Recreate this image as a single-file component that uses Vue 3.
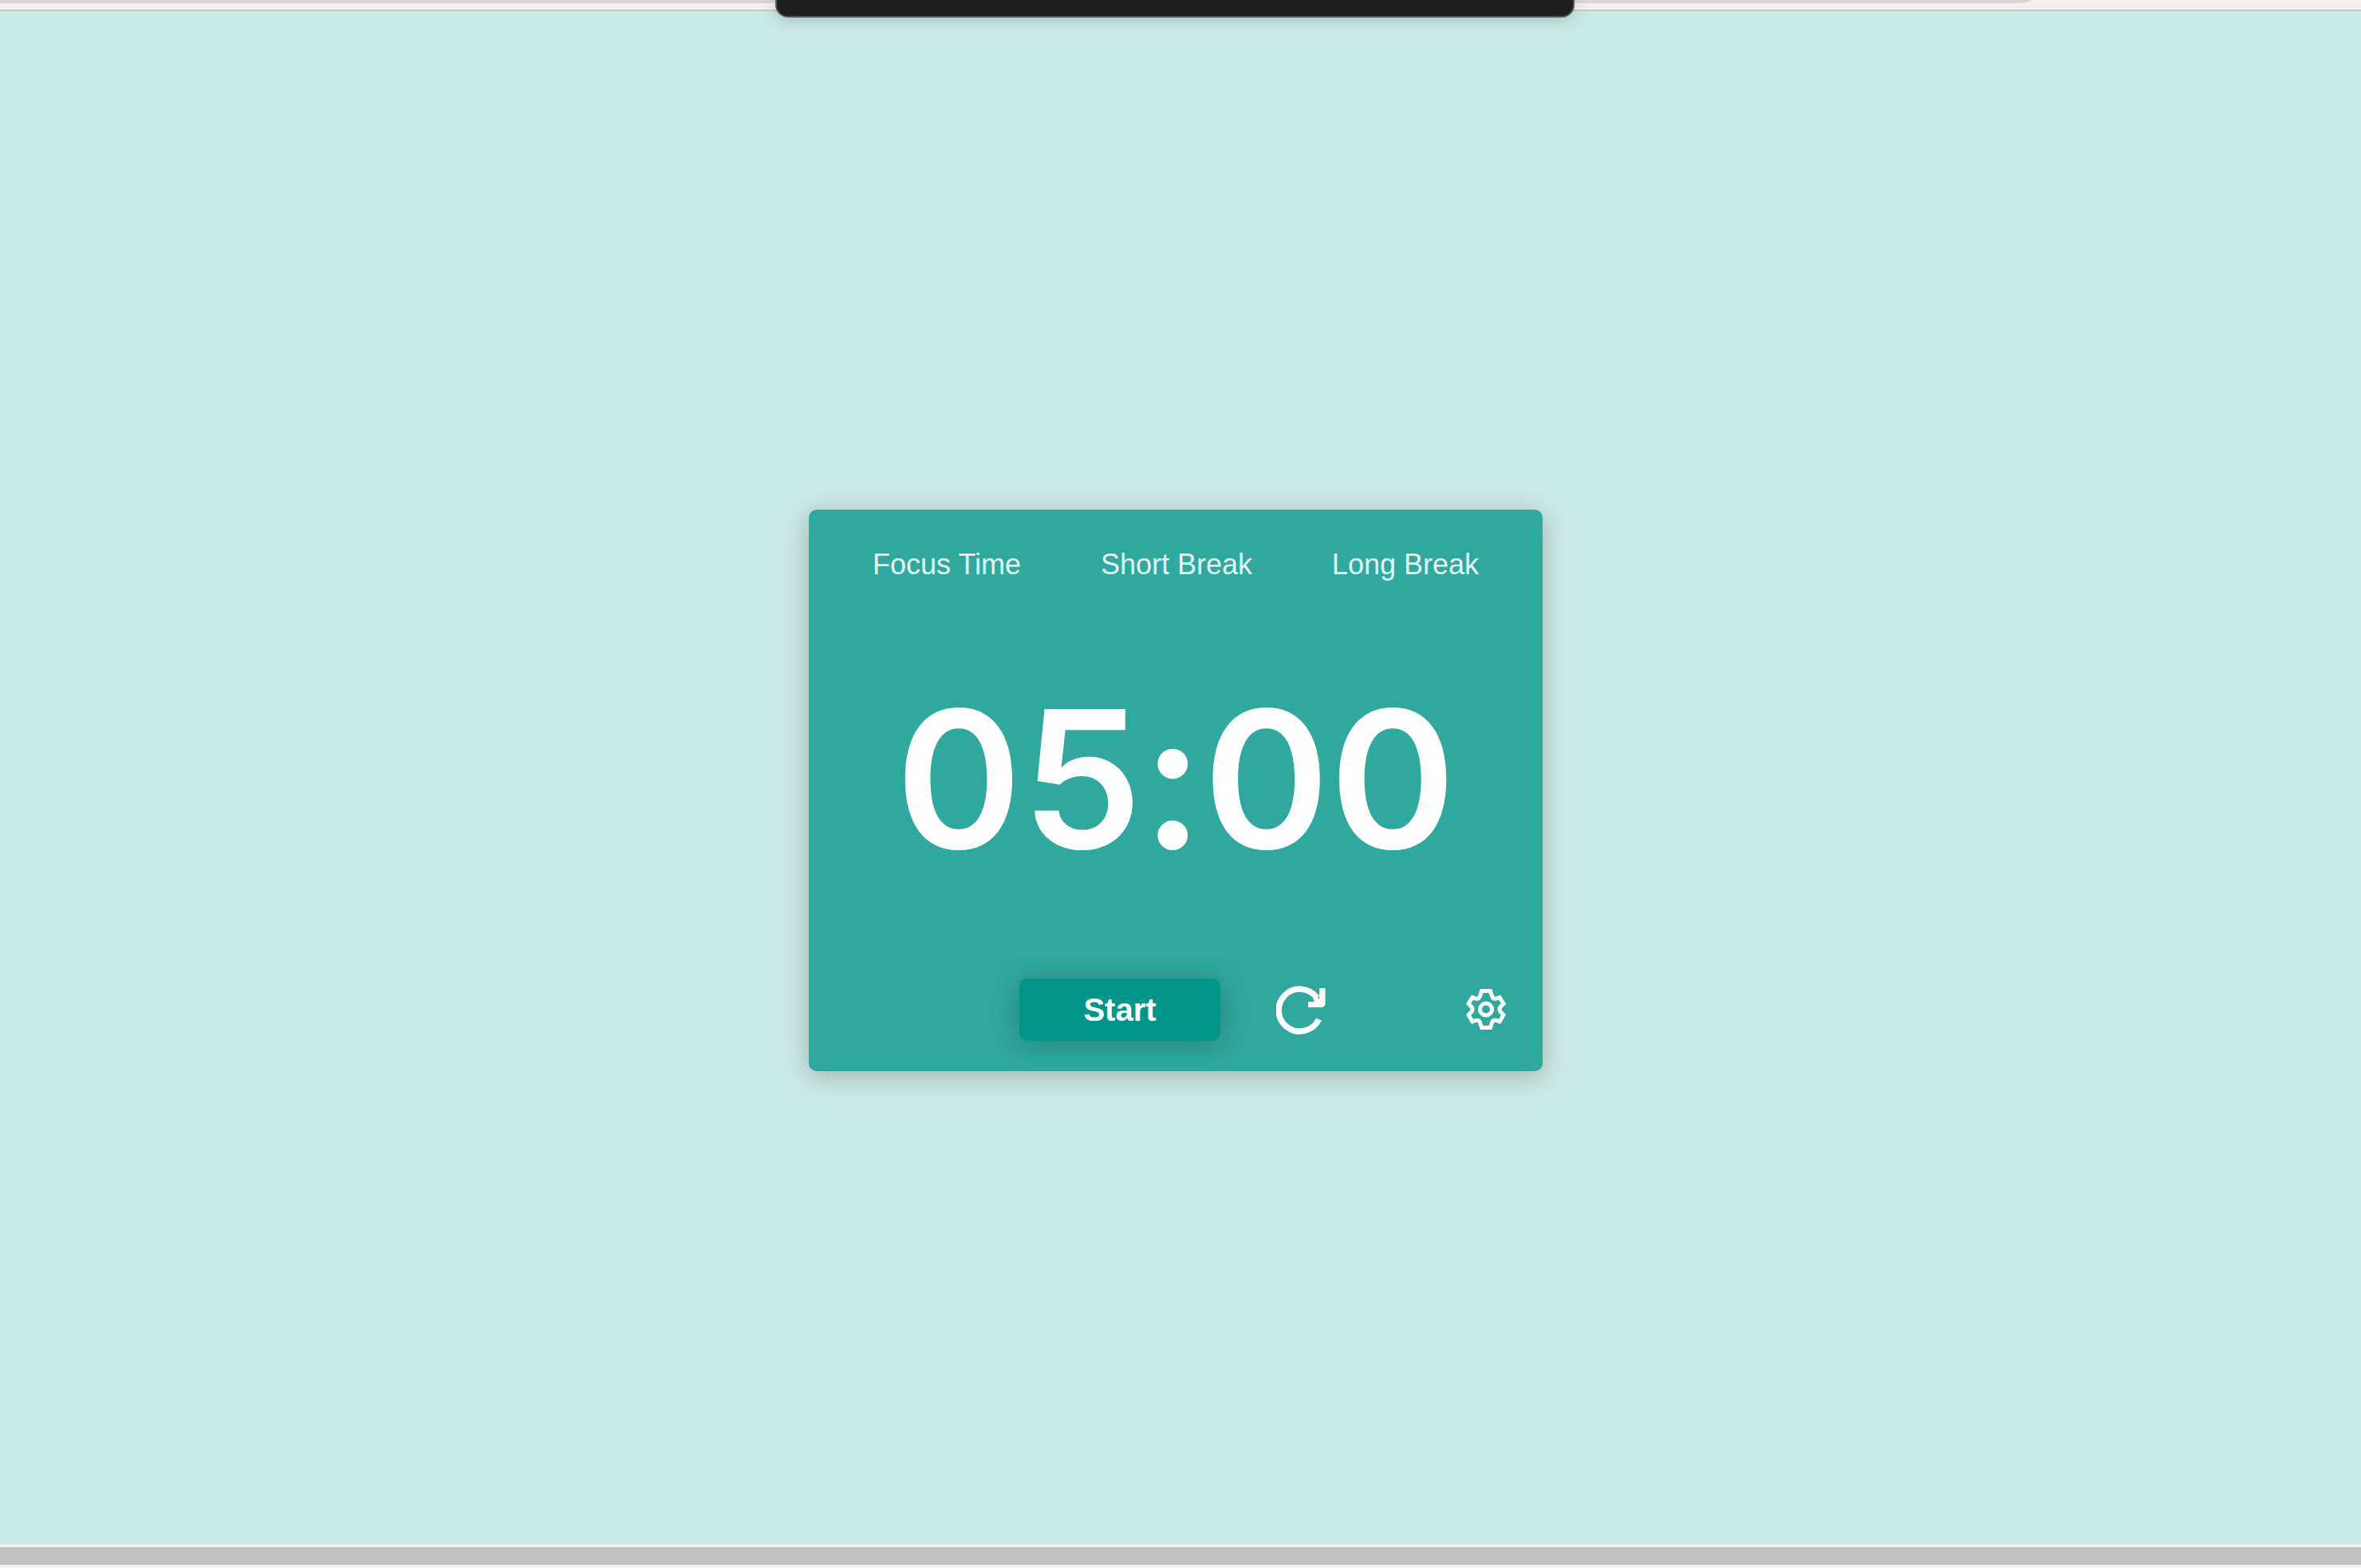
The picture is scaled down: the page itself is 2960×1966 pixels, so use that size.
<script setup>
import { computed, onUnmounted, ref } from 'vue'

const modes = [
  { label: 'Focus Time', minutes: 25 },
  { label: 'Short Break', minutes: 5 },
  { label: 'Long Break', minutes: 15 },
]

const current = ref(modes[1])
const remaining = ref(current.value.minutes * 60)
const running = ref(false)
let timer = null

const clock = computed(() => {
  const m = String(Math.floor(remaining.value / 60)).padStart(2, '0')
  const s = String(remaining.value % 60).padStart(2, '0')
  return `${m}:${s}`
})

function stop() {
  clearInterval(timer)
  running.value = false
}

function reset() {
  stop()
  remaining.value = current.value.minutes * 60
}

function select(mode) {
  current.value = mode
  reset()
}

function toggle() {
  if (running.value) return stop()
  running.value = true
  timer = setInterval(() => {
    if (remaining.value > 0) remaining.value--
    else stop()
  }, 1000)
}

onUnmounted(stop)
</script>

<template>
  <div class="screen">
    <header class="toolbar">
      <div class="toolbar-field"></div>
      <div class="notch"></div>
    </header>

    <main class="page">
      <section class="card">
        <nav class="modes">
          <button v-for="mode in modes" :key="mode.label" type="button" class="mode" @click="select(mode)">
            {{ mode.label }}
          </button>
        </nav>

        <div class="clock" role="timer">{{ clock }}</div>

        <div class="controls">
          <div class="main-controls">
            <button type="button" class="start" @click="toggle">{{ running ? 'Pause' : 'Start' }}</button>
            <button type="button" class="icon" aria-label="Reset" @click="reset">
              <svg width="70" height="64" viewBox="0 0 70 64" fill="none">
                <path d="M53.5 44A26.5 26.5 0 1 1 51 17" stroke="#fff" stroke-width="7.5" />
                <path d="M54 5H61.500V26L58.500 29H40V22H48L46 18L51 15L54 19Z" fill="#fff" />
              </svg>
            </button>
          </div>
          <button type="button" class="icon settings" aria-label="Settings">
            <svg width="52" height="52" viewBox="0 0 52 52" fill="none" stroke="#fff" stroke-width="5">
              <path
                d="M20.500 2.500H31.500L33.500 9Q35 13 39 12L43 10.500L48 18.500L44.500 22Q41.500 25.500 44.500 29L48 32.500L43 41L39 39.500Q35 38.500 33.500 42L31.500 48.500H20.500L18.500 42Q17 38.500 13 39.500L9 41L4 32.500L7.500 29Q10.500 25.500 7.500 22L4 18.500L9 10.500L13 12Q17 13 18.500 9Z"
              />
              <circle cx="26" cy="25.500" r="7.500" />
            </svg>
          </button>
        </div>
      </section>
    </main>

    <footer class="scrollbar">
      <div class="thumb"></div>
    </footer>
  </div>
</template>

<style>
body {
  margin: 0;
}
</style>

<style scoped>
.screen {
  display: flex;
  flex-direction: column;
  min-height: 100vh;
  background: #c9e9e7;
  font-family: "Liberation Sans", Arial, sans-serif;
  overflow: hidden;
}

.toolbar {
  position: relative;
  height: 12px;
  background: #f5efef;
  border-bottom: 2px solid #c9c6c8;
}

.toolbar-field {
  width: 86%;
  height: 4px;
  background: #d8d4d6;
  border-bottom-right-radius: 20px 4px;
}

.notch {
  position: absolute;
  top: 0;
  left: calc(50% - 7px);
  transform: translateX(-50%);
  box-sizing: border-box;
  width: 1002px;
  height: 22px;
  background: #1e1e1e;
  border: 2px solid #555;
  border-top: 0;
  border-radius: 0 0 16px 16px;
  box-shadow: 0 2px 20px rgba(0, 0, 0, 0.2);
}

.page {
  flex: 1;
  display: flex;
  align-items: center;
  justify-content: center;
  padding: 32px 12px 0 0;
}

.card {
  box-sizing: border-box;
  width: 920px;
  padding: 48px 0 38px;
  background: #2fa99e;
  border-radius: 10px;
  box-shadow: 0 6px 32px rgba(94, 65, 45, 0.33);
}

button {
  margin: 0;
  padding: 0;
  border: 0;
  background: none;
  font-family: inherit;
  cursor: pointer;
}

.modes {
  display: flex;
  justify-content: space-between;
  padding: 0 80px;
}

.mode {
  font-size: 36px;
  line-height: 42px;
  color: #e6f5f3;
}

.clock {
  padding: 98px 0 100px;
  font-family: Inter, sans-serif;
  font-size: 240px;
  font-weight: 600;
  line-height: 300px;
  font-feature-settings: "calt" 0;
  text-align: center;
  color: #fff;
}

.controls {
  display: grid;
  grid-template-columns: 1fr auto 1fr;
  align-items: center;
}

.main-controls {
  grid-column: 2;
  display: flex;
  align-items: center;
  gap: 70px;
}

.start {
  width: 252px;
  height: 78px;
  border-radius: 10px;
  background: #009688;
  box-shadow: 0 4px 32px rgba(34, 34, 34, 0.3);
  font-size: 40px;
  font-weight: 700;
  color: #fff;
}

.icon {
  display: flex;
}

.settings {
  justify-self: end;
  margin-right: 45px;
}

.scrollbar {
  padding: 4px 0;
  background: #efefef;
}

.thumb {
  height: 22px;
  background: #c1c1c1;
}
</style>
